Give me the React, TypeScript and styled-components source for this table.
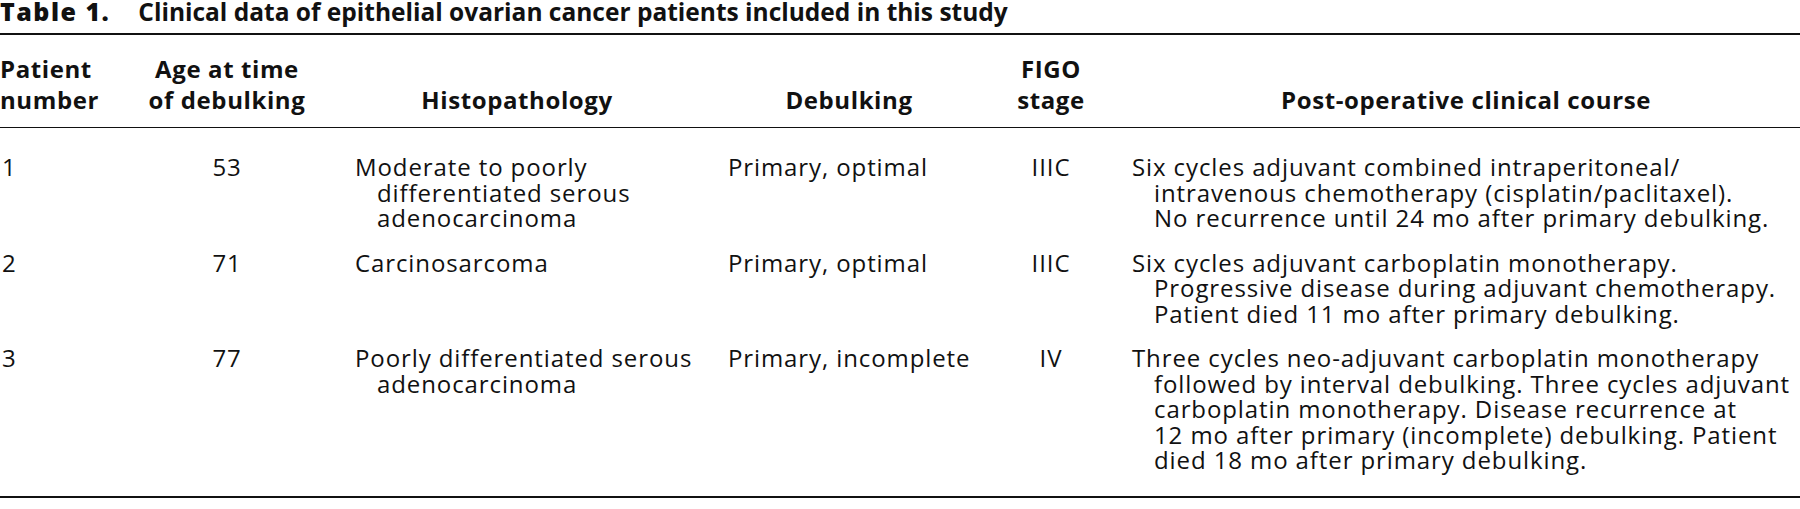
import React from "react";
import styled, { createGlobalStyle } from "styled-components";

type Align = "left" | "center";

interface Column {
  title: string[];
  align: Align;
  headPad: string;
  bodyPad: string;
}

const columns: Column[] = [
  { title: ["Patient", "number"], align: "left", headPad: "0", bodyPad: "0 0 0 2px" },
  { title: ["Age at time", "of debulking"], align: "center", headPad: "0", bodyPad: "0" },
  { title: ["Histopathology"], align: "center", headPad: "0 49px", bodyPad: "0 0 0 49px" },
  { title: ["Debulking"], align: "center", headPad: "0", bodyPad: "0" },
  { title: ["FIGO", "stage"], align: "center", headPad: "0", bodyPad: "0" },
  { title: ["Post-operative clinical course"], align: "center", headPad: "0", bodyPad: "0" },
];

const bodyAlign: Align[] = ["left", "center", "left", "left", "center", "left"];

const rows: string[][][] = [
  [
    ["1"],
    ["53"],
    ["Moderate to poorly", "differentiated serous", "adenocarcinoma"],
    ["Primary, optimal"],
    ["IIIC"],
    [
      "Six cycles adjuvant combined intraperitoneal/",
      "intravenous chemotherapy (cisplatin/paclitaxel).",
      "No recurrence until 24 mo after primary debulking.",
    ],
  ],
  [
    ["2"],
    ["71"],
    ["Carcinosarcoma"],
    ["Primary, optimal"],
    ["IIIC"],
    [
      "Six cycles adjuvant carboplatin monotherapy.",
      "Progressive disease during adjuvant chemotherapy.",
      "Patient died 11 mo after primary debulking.",
    ],
  ],
  [
    ["3"],
    ["77"],
    ["Poorly differentiated serous", "adenocarcinoma"],
    ["Primary, incomplete"],
    ["IV"],
    [
      "Three cycles neo-adjuvant carboplatin monotherapy",
      "followed by interval debulking. Three cycles adjuvant",
      "carboplatin monotherapy. Disease recurrence at",
      "12 mo after primary (incomplete) debulking. Patient",
      "died 18 mo after primary debulking.",
    ],
  ],
];

const App = () => {
  return (
    <>
      <GlobalStyle />
      <Page>
        <Caption>
          <Label>Table 1.</Label>
          <span>Clinical data of epithelial ovarian cancer patients included in this study</span>
        </Caption>
        <Table>
          <Head>
            {columns.map((col) => (
              <HeadCell key={col.title.join(" ")} $align={col.align} $pad={col.headPad}>
                {col.title.map((t) => (
                  <div key={t}>{t}</div>
                ))}
              </HeadCell>
            ))}
          </Head>
          <Body>
            {rows.map((row, r) => (
              <Row key={r}>
                {row.map((lines, c) => (
                  <Cell key={c} $align={bodyAlign[c]} $pad={columns[c].bodyPad}>
                    {lines.map((line, i) => (
                      <Line key={i} $hang={i > 0}>
                        {line}
                      </Line>
                    ))}
                  </Cell>
                ))}
              </Row>
            ))}
          </Body>
        </Table>
      </Page>
    </>
  );
};

export default App;

const GlobalStyle = createGlobalStyle`
  html, body {
    margin: 0;
    padding: 0;
    background: #fff;
  }

  body {
    font-family: "Open Sans", "Noto Sans", sans-serif;
    color: #111;
  }
`;

const Page = styled.div`
  width: 1800px;
  height: 509px;
  overflow: hidden;
  background: #fff;
`;

const Caption = styled.div`
  display: flex;
  align-items: baseline;
  height: 22px;
  line-height: 22px;
  font-size: 24.5px;
  font-weight: 700;
  white-space: nowrap;
  margin-bottom: 11px;
`;

const Label = styled.span`
  font-size: 25px;
  font-weight: 800;
  letter-spacing: 1.5px;
  margin-right: 28px;
`;

const Table = styled.div`
  border-top: 2px solid #111;
  border-bottom: 2px solid #111;
`;

const grid = `
  display: grid;
  grid-template-columns: 148px 158px 422px 242px 162px 1fr;
`;

const Head = styled.div`
  ${grid}
  padding: 18px 0 12px;
  border-bottom: 1px solid #111;
  font-size: 24px;
  font-weight: 700;
  line-height: 31px;
  letter-spacing: 0.6px;
`;

const HeadCell = styled.div<{ $align: Align; $pad: string }>`
  align-self: end;
  text-align: ${(p) => p.$align};
  padding: ${(p) => p.$pad};
  white-space: nowrap;
`;

const Body = styled.div`
  display: flex;
  flex-direction: column;
  gap: 19px;
  padding: 26px 0 23px;
  font-size: 24px;
  line-height: 25.5px;
  letter-spacing: 0.9px;
`;

const Row = styled.div`
  ${grid}
`;

const Cell = styled.div<{ $align: Align; $pad: string }>`
  text-align: ${(p) => p.$align};
  padding: ${(p) => p.$pad};
  white-space: nowrap;
`;

const Line = styled.div<{ $hang: boolean }>`
  padding-left: ${(p) => (p.$hang ? "22px" : "0")};
`;
